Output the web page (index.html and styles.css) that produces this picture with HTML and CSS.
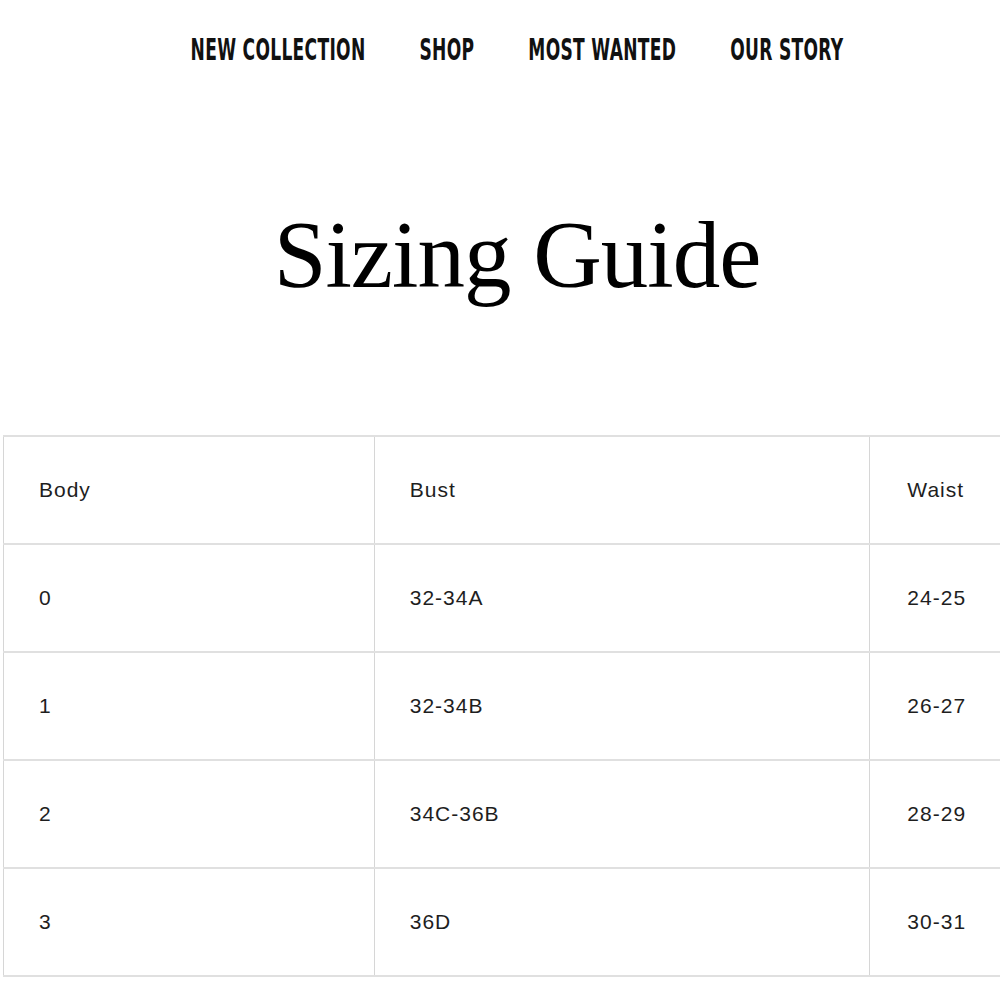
FILE: index.html
```html
<!DOCTYPE html>
<html lang="en">
<head>
    <meta charset="UTF-8">
    <meta name="viewport" content="width=device-width, initial-scale=1.0">
    <title>Sizing Guide</title>
    <link rel="stylesheet" href="styles.css">
</head>
<body>
    <header class="site-header">
        <nav class="main-nav">
            <a href="#">New Collection</a>
            <a href="#">Shop</a>
            <a href="#">Most Wanted</a>
            <a href="#">Our Story</a>
        </nav>
    </header>

    <main>
        <h1 class="page-title">Sizing Guide</h1>

        <table class="size-table">
            <colgroup>
                <col class="col-body">
                <col class="col-bust">
                <col class="col-waist">
            </colgroup>
            <tr>
                <td>Body</td>
                <td>Bust</td>
                <td>Waist</td>
            </tr>
            <tr>
                <td>0</td>
                <td>32-34A</td>
                <td>24-25</td>
            </tr>
            <tr>
                <td>1</td>
                <td>32-34B</td>
                <td>26-27</td>
            </tr>
            <tr>
                <td>2</td>
                <td>34C-36B</td>
                <td>28-29</td>
            </tr>
            <tr>
                <td>3</td>
                <td>36D</td>
                <td>30-31</td>
            </tr>
        </table>
    </main>
</body>
</html>
```

FILE: styles.css
```css
body {
    margin: 0;
    background: #fff;
    color: #222;
    overflow: hidden;
}
.site-header {
    padding: 31px 0 0 34px;
}
.main-nav {
    display: flex;
    justify-content: center;
    gap: 54px;
}
.main-nav a {
    display: inline-block;
    font-family: "DejaVu Sans Condensed", sans-serif;
    font-weight: bold;
    font-size: 19px;
    line-height: 36px;
    letter-spacing: 0.3px;
    text-transform: uppercase;
    text-decoration: none;
    color: #111;
    transform: scaleY(1.55);
}
.page-title {
    margin: 133px 0 0;
    padding-left: 34px;
    text-align: center;
    font-family: "Liberation Serif", serif;
    font-weight: normal;
    font-size: 95px;
    line-height: 110px;
    letter-spacing: -1px;
    color: #000;
}
.size-table {
    margin: 125px 0 0 3px;
    width: 1367px;
    border-collapse: collapse;
    font-family: "Liberation Sans", Arial, sans-serif;
    font-size: 21px;
    letter-spacing: 1px;
    color: #1e1e1e;
}
.col-body { width: 371px; }
.col-bust { width: 496px; }
.col-waist { width: 500px; }
.size-table td {
    height: 106px;
    padding: 0 0 0 35px;
    border-top: 2px solid #e0e0e0;
    border-bottom: 2px solid #e0e0e0;
    border-left: 1px solid #d6d6d6;
    border-right: 1px solid #d6d6d6;
    vertical-align: middle;
}
.size-table td:last-child {
    padding-left: 37px;
}
```
